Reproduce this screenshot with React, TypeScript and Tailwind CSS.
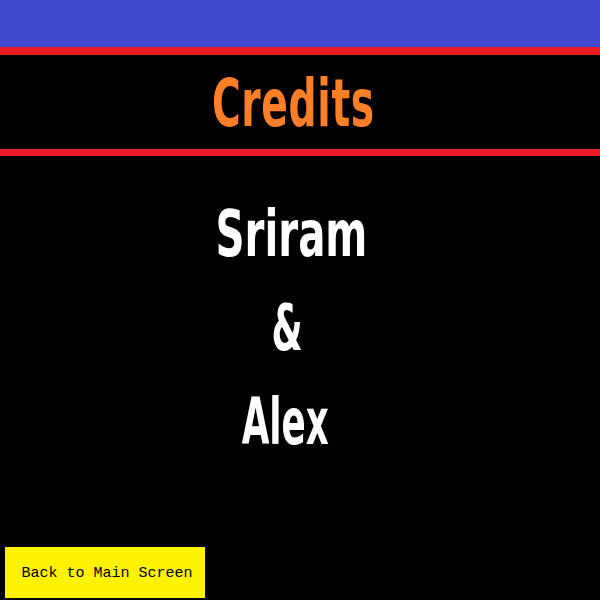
export default function App() {
  const condensed = { fontFamily: '"DejaVu Sans Condensed", "DejaVu Sans", sans-serif' };
  return (
    <div className="w-[600px] h-[600px] bg-black flex flex-col overflow-hidden">
      <div className="h-[47px] bg-[#3f48cc]" />
      <div className="h-[8px] bg-[#ed1c24]" />
      <div className="h-[94px] flex items-center justify-center pt-[4px]">
        <span
          className="text-[#ff7f27] text-[66px] font-bold leading-none inline-block scale-x-[0.66] tracking-[1px] -ml-[14px]"
          style={condensed}
        >
          Credits
        </span>
      </div>
      <div className="h-[7px] bg-[#ed1c24]" />
      <div className="flex-1 flex flex-col items-center pt-[46px]">
        <span className="text-white text-[64px] font-bold leading-none inline-block scale-x-[0.70] -ml-[18px]" style={condensed}>
          Sriram
        </span>
        <span className="text-white text-[64px] font-bold leading-none inline-block scale-x-[0.62] mt-[30px] -ml-[26px]" style={condensed}>
          &amp;
        </span>
        <span className="text-white text-[64px] font-bold leading-none inline-block scale-x-[0.62] mt-[30px] -ml-[30px]" style={condensed}>
          Alex
        </span>
        <div className="flex-1" />
        <div className="self-start ml-[5px] mb-[2px] w-[200px] h-[51px] bg-[#fff200] flex items-center justify-center pl-[4px] pt-[4px]">
          <span className="text-black text-[15px]" style={{ fontFamily: '"Liberation Mono", monospace' }}>
            Back to Main Screen
          </span>
        </div>
      </div>
    </div>
  );
}
